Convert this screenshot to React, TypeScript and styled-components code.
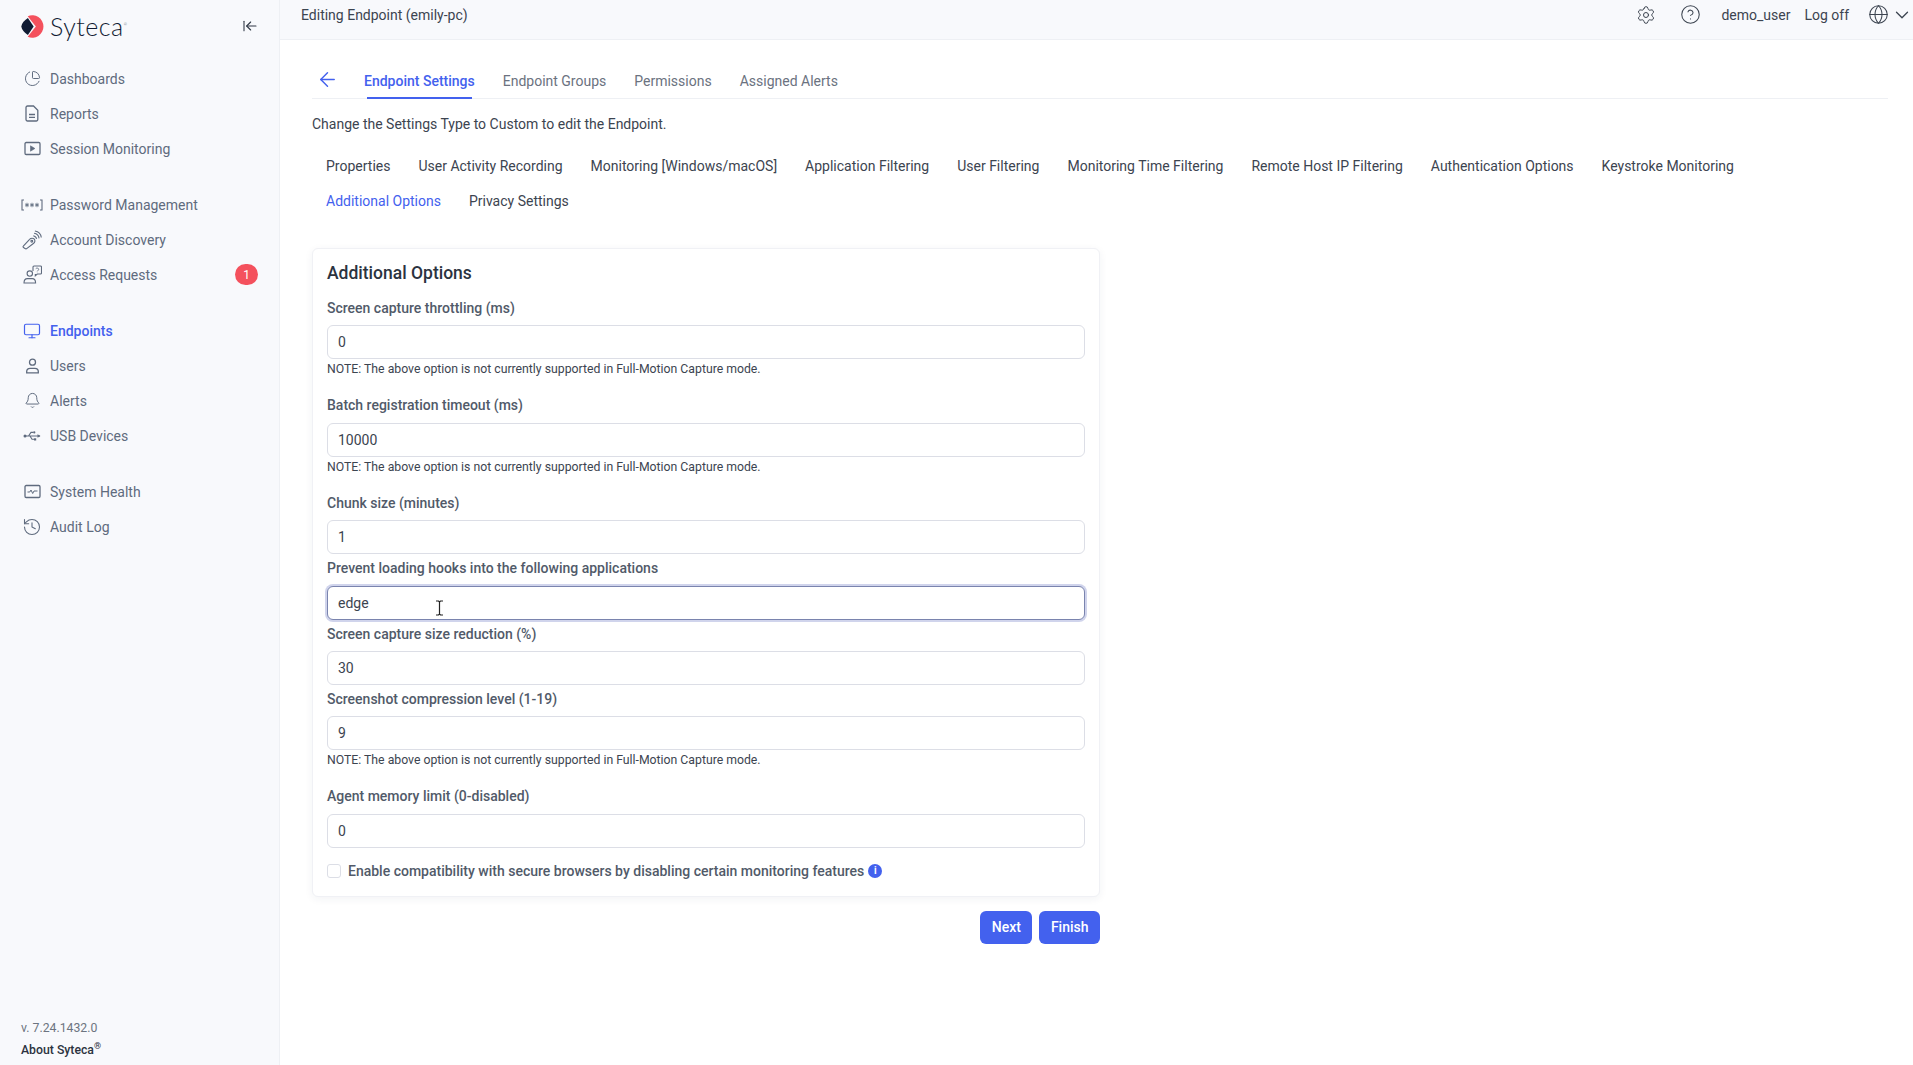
import styled, { createGlobalStyle } from 'styled-components';
import {
  ArrowLeft,
  ArrowLeftToLine,
  Bell,
  ChartPie,
  ChevronDown,
  CircleHelp,
  Globe,
  History,
  Monitor,
  Settings,
} from 'lucide-react';

const GlobalStyle = createGlobalStyle`
  * { box-sizing: border-box; }
  html, body { margin: 0; height: 100%; background: #fff; }
  body {
    font-family: Roboto, "Liberation Sans", sans-serif;
    font-size: 14px;
    color: #3c4450;
  }
`;

const ReportIcon = () => (
  <svg width="14" height="17" viewBox="0 0 14 17" fill="none" stroke="currentColor" strokeWidth="1.3">
    <path d="M2.500 1h6l4.300 4.300v9.200a1.500 1.500 0 0 1-1.500 1.500H2.500A1.500 1.500 0 0 1 1 14.500v-12A1.500 1.500 0 0 1 2.500 1z" />
    <path d="M4 9.500h6M4 12.300h6" />
  </svg>
);

const SessionIcon = () => (
  <svg width="17" height="15" viewBox="0 0 17 15" fill="none" stroke="currentColor" strokeWidth="1.3">
    <rect x="1" y="1.500" width="15" height="12" rx="1.200" />
    <path d="M6.500 4.800v5.400l4.400-2.700z" fill="currentColor" strokeWidth="0.6" />
  </svg>
);

const PasswordIcon = () => (
  <svg width="22" height="12" viewBox="0 0 22 12" fill="none" stroke="currentColor" strokeWidth="1.100">
    <path d="M3 1H1v10h2M19 1h2v10h-2" />
    <path
      d="M6 3.800v4.400M4.100 4.900l3.800 2.200M7.900 4.900 4.100 7.100M11 3.800v4.400M9.100 4.900l3.800 2.200M12.900 4.900 9.100 7.100M16 3.800v4.400M14.100 4.900l3.800 2.200M17.900 4.900l-3.800 2.200"
      strokeWidth="0.900"
    />
  </svg>
);

const DiscoveryIcon = () => (
  <svg width="20" height="20" viewBox="0 0 20 20" fill="none" stroke="currentColor" strokeWidth="1.100">
    <path d="M1.300 16.200 7.600 9.300c1.300-1.500 3.700-1.400 4.700-.1 1 1.300.7 3.100-.6 4L5 18.400c-.6.500-1.400.5-2 .1l-1.500-1c-.5-.3-.6-.9-.2-1.300z" />
    <circle cx="9.800" cy="11.200" r="0.900" />
    <path d="M11.300 5.700c1.600.3 3 1.600 3.300 3.200M12.100 3.300c2.600.4 4.600 2.400 5 5M12.900 1c3.400.5 6 3.100 6.400 6.500" />
  </svg>
);

const RequestIcon = () => (
  <svg width="19" height="19" viewBox="0 0 19 19" fill="none" stroke="currentColor" strokeWidth="1.100">
    <circle cx="6.800" cy="8.600" r="2.700" />
    <path d="M1 18c0-3 1.400-4.400 3.400-4.400h4.800c2 0 3.400 1.400 3.400 4.400z" />
    <path d="M10 6V2a1 1 0 0 1 1-1h6.500a1 1 0 0 1 1 1v6a1 1 0 0 1-1 1h-3.200l-2 1.700V9" />
    <path d="M12.800 3.800c.2-1 2.900-1 2.900.6 0 1-1.300 1-1.400 2M14.300 7.600v.2" strokeWidth="0.900" />
  </svg>
);

const UserIcon = () => (
  <svg width="15" height="16" viewBox="0 0 15 16" fill="none" stroke="currentColor" strokeWidth="1.300">
    <circle cx="7.500" cy="4.200" r="3" />
    <path d="M1.700 14.800v-1.200c0-2 1.500-3.300 3.400-3.300h4.800c1.900 0 3.400 1.300 3.400 3.300v1.200z" />
  </svg>
);

const UsbIcon = () => (
  <svg width="18" height="14" viewBox="0 0 18 14" fill="none" stroke="currentColor" strokeWidth="1.100">
    <circle cx="2" cy="7" r="1.500" fill="currentColor" stroke="none" />
    <path d="M2 7h15M5.500 7l2.500-3.600h2.500M7 7l2 3.300h2" />
    <path d="m14.500 5.300 3 1.700-3 1.700z" fill="currentColor" stroke="none" />
    <circle cx="11.300" cy="3.400" r="1.100" fill="currentColor" stroke="none" />
    <rect x="11" y="9.300" width="2.200" height="2.200" fill="currentColor" stroke="none" />
  </svg>
);

const HealthIcon = () => (
  <svg width="17" height="15" viewBox="0 0 17 15" fill="none" stroke="currentColor" strokeWidth="1.300">
    <rect x="1" y="1.500" width="15" height="12" rx="1.200" />
    <path d="M3.500 8h2.300l1.200-2 1.700 3.500L10 7h3.500" strokeWidth="1" />
  </svg>
);

const LogoIcon = () => (
  <svg width="23" height="23" viewBox="0 0 24 24">
    <path d="M7 1.300A11.700 11.700 0 1 1 7 22.700L15.500 12z" fill="#f4515d" />
    <path d="M7.200 3.200Q1.200 7 .3 12q.9 5 6.900 8.800L13.200 12z" fill="#101b33" />
  </svg>
);

const navGroups = [
  [
    { label: 'Dashboards', icon: <ChartPie size={17} strokeWidth={1.4} /> },
    { label: 'Reports', icon: <ReportIcon /> },
    { label: 'Session Monitoring', icon: <SessionIcon /> },
  ],
  [
    { label: 'Password Management', icon: <PasswordIcon /> },
    { label: 'Account Discovery', icon: <DiscoveryIcon /> },
    { label: 'Access Requests', icon: <RequestIcon />, badge: '1' },
  ],
  [
    { label: 'Endpoints', icon: <Monitor size={18} strokeWidth={1.6} />, active: true },
    { label: 'Users', icon: <UserIcon /> },
    { label: 'Alerts', icon: <Bell size={17} strokeWidth={1.4} /> },
    { label: 'USB Devices', icon: <UsbIcon /> },
  ],
  [
    { label: 'System Health', icon: <HealthIcon /> },
    { label: 'Audit Log', icon: <History size={20} strokeWidth={1.3} /> },
  ],
];

const NOTE = 'NOTE: The above option is not currently supported in Full-Motion Capture mode.';

const fields: { label: string; value: string; note?: boolean; focused?: boolean }[] = [
  { label: 'Screen capture throttling (ms)', value: '0', note: true },
  { label: 'Batch registration timeout (ms)', value: '10000', note: true },
  { label: 'Chunk size (minutes)', value: '1' },
  { label: 'Prevent loading hooks into the following applications', value: 'edge', focused: true },
  { label: 'Screen capture size reduction (%)', value: '30' },
  { label: 'Screenshot compression level (1-19)', value: '9', note: true },
  { label: 'Agent memory limit (0-disabled)', value: '0' },
];

const topTabs = ['Endpoint Settings', 'Endpoint Groups', 'Permissions', 'Assigned Alerts'];
const subTabs = [
  'Properties',
  'User Activity Recording',
  'Monitoring [Windows/macOS]',
  'Application Filtering',
  'User Filtering',
  'Monitoring Time Filtering',
  'Remote Host IP Filtering',
  'Authentication Options',
  'Keystroke Monitoring',
  'Additional Options',
  'Privacy Settings',
];

function Field({ label, value, note, focused }: { label: string; value: string; note?: boolean; focused?: boolean }) {
  return (
    <FieldGroup>
      <FieldLabel>{label}</FieldLabel>
      <InputWrap>
        <TextInput defaultValue={value} $focused={focused} readOnly />
        {focused && (
          <TextCursor width="9" height="16" viewBox="0 0 9 16" fill="none">
            <path d="M1 1h2.500l1 1 1-1H8M4.500 2v12M1 15h2.500l1-1 1 1H8" stroke="#222" strokeWidth="1.200" />
          </TextCursor>
        )}
      </InputWrap>
      {note && <Note>{NOTE}</Note>}
    </FieldGroup>
  );
}

export default function App() {
  return (
    <Page>
      <GlobalStyle />
      <Sidebar>
        <Brand>
          <LogoIcon />
          <BrandName>
            Syteca<BrandMark>®</BrandMark>
          </BrandName>
          <CollapseButton>
            <ArrowLeftToLine size={16} strokeWidth={1.6} />
          </CollapseButton>
        </Brand>
        {navGroups.map((group, i) => (
          <NavGroup key={i}>
            {group.map((item) => (
              <NavItem key={item.label} $active={item.active}>
                <NavIcon>{item.icon}</NavIcon>
                {item.label}
                {item.badge && <Badge>{item.badge}</Badge>}
              </NavItem>
            ))}
          </NavGroup>
        ))}
        <SideFooter>
          <Version>v. 7.24.1432.0</Version>
          <About>
            About Syteca<sup>®</sup>
          </About>
        </SideFooter>
      </Sidebar>
      <Main>
        <TopBar>
          <PageTitle>Editing Endpoint (emily-pc)</PageTitle>
          <TopActions>
            <TopIcon>
              <Settings size={20} strokeWidth={1.2} />
            </TopIcon>
            <TopIcon>
              <CircleHelp size={21} strokeWidth={1.2} />
            </TopIcon>
            <TopLink $left={8}>demo_user</TopLink>
            <TopLink $left={14}>Log off</TopLink>
            <LangPicker>
              <Globe size={21} strokeWidth={1.2} />
              <ChevronDown size={22} strokeWidth={1.4} />
            </LangPicker>
          </TopActions>
        </TopBar>
        <Content>
          <TopTabs>
            <BackLink>
              <ArrowLeft size={23} strokeWidth={1.5} />
            </BackLink>
            {topTabs.map((tab, i) => (
              <TopTab key={tab} $active={i === 0}>
                {tab}
              </TopTab>
            ))}
          </TopTabs>
          <Hint>Change the Settings Type to Custom to edit the Endpoint.</Hint>
          <SubTabs>
            {subTabs.map((tab) => (
              <SubTab key={tab} $active={tab === 'Additional Options'}>
                {tab}
              </SubTab>
            ))}
          </SubTabs>
          <FormColumn>
            <Card>
              <CardTitle>Additional Options</CardTitle>
              {fields.map((f) => (
                <Field key={f.label} {...f} />
              ))}
              <CheckRow>
                <CheckBox type="checkbox" readOnly />
                Enable compatibility with secure browsers by disabling certain monitoring features
                <InfoDot>i</InfoDot>
              </CheckRow>
            </Card>
            <Actions>
              <PrimaryButton>Next</PrimaryButton>
              <PrimaryButton>Finish</PrimaryButton>
            </Actions>
          </FormColumn>
        </Content>
      </Main>
    </Page>
  );
}

const Page = styled.div`
  display: flex;
  height: 100vh;
  overflow: hidden;
`;

const Sidebar = styled.aside`
  width: 280px;
  flex: none;
  display: flex;
  flex-direction: column;
  background: #f8f9fc;
  border-right: 1px solid #eef0f4;
`;

const Brand = styled.div`
  height: 61px;
  padding: 15px 21px 0;
  display: flex;
  align-items: flex-start;
  gap: 6px;
`;

const BrandName = styled.span`
  margin-top: -4px;
  font-family: Lato, Roboto, sans-serif;
  font-size: 25px;
  font-weight: 300;
  line-height: 28px;
  color: #101b33;
  letter-spacing: 0.5px;
`;

const BrandMark = styled.span`
  font-size: 4px;
  vertical-align: 10px;
`;

const CollapseButton = styled.span`
  margin-left: auto;
  margin-top: 3px;
  color: #2e3744;
  display: flex;
`;

const NavGroup = styled.nav`
  margin-bottom: 21px;
`;

const NavItem = styled.a<{ $active?: boolean }>`
  height: 35px;
  padding: 0 21px;
  display: flex;
  align-items: center;
  gap: 7px;
  color: ${(p) => (p.$active ? '#4361ee' : '#5f6b7e')};
  font-weight: ${(p) => (p.$active ? 500 : 400)};
`;

const NavIcon = styled.span`
  width: 22px;
  height: 22px;
  display: flex;
  align-items: center;
  justify-content: center;
  flex: none;
`;

const Badge = styled.span`
  margin-left: auto;
  width: 23px;
  height: 21px;
  border-radius: 11px;
  background: #f4515d;
  color: #fff;
  font-size: 12px;
  display: flex;
  align-items: center;
  justify-content: center;
`;

const SideFooter = styled.div`
  margin-top: auto;
  padding: 0 21px 5px;
`;

const Version = styled.div`
  margin-bottom: 1px;
  font-size: 12.25px;
  line-height: 22px;
  color: #6c7480;
`;

const About = styled.div`
  font-size: 12.25px;
  font-weight: 500;
  line-height: 20px;
  color: #2b3340;

  sup {
    font-size: 9px;
    line-height: 0;
  }
`;

const Main = styled.main`
  flex: 1;
  min-width: 0;
  display: flex;
  flex-direction: column;
`;

const TopBar = styled.header`
  height: 40px;
  flex: none;
  padding: 0 0 10px 21px;
  display: flex;
  align-items: center;
  justify-content: space-between;
  background: #f8f9fc;
  border-bottom: 1px solid #eef0f4;
`;

const PageTitle = styled.div`
  color: #3c4450;
`;

const TopActions = styled.div`
  display: flex;
  align-items: center;
  color: #3c4450;
`;

const TopIcon = styled.span`
  width: 45px;
  display: flex;
  justify-content: center;
`;

const TopLink = styled.span<{ $left: number }>`
  margin-left: ${(p) => p.$left}px;
`;

const LangPicker = styled.span`
  margin-left: 19px;
  display: flex;
  align-items: center;
  gap: 2px;
`;

const Content = styled.div`
  flex: 1;
  padding: 20px 25px 0 32px;
`;

const TopTabs = styled.div`
  display: flex;
  height: 39px;
  border-bottom: 1px solid #eef0f4;
`;

const BackLink = styled.span`
  width: 52px;
  padding-left: 4px;
  padding-top: 8px;
  color: #4361ee;
`;

const TopTab = styled.span<{ $active?: boolean }>`
  position: relative;
  margin-right: 28px;
  padding-top: 13px;
  color: ${(p) => (p.$active ? '#4361ee' : '#6b7280')};
  font-weight: ${(p) => (p.$active ? 500 : 400)};

  ${(p) =>
    p.$active &&
    `&::after {
      content: '';
      position: absolute;
      left: 3px;
      right: 3px;
      bottom: -1px;
      height: 2px;
      background: #4361ee;
    }`}
`;

const Hint = styled.p`
  margin: 15px 0 0;
  line-height: 20px;
  color: #3c4450;
`;

const SubTabs = styled.div`
  display: flex;
  flex-wrap: wrap;
  max-width: 1480px;
  margin-top: 15px;
`;

const SubTab = styled.span<{ $active?: boolean }>`
  padding: 0 14px;
  line-height: 35px;
  color: ${(p) => (p.$active ? '#4361ee' : '#3c4450')};
`;

const FormColumn = styled.div`
  width: 788px;
  margin-top: 29px;
`;

const Card = styled.section`
  padding: 12px 14px 15px;
  background: #fff;
  border: 1px solid #f0f1f5;
  border-radius: 6px;
  box-shadow: 0 2px 8px rgba(40, 50, 80, 0.06);
`;

const CardTitle = styled.h2`
  margin: 0 0 9px;
  font-size: 17.5px;
  font-weight: 500;
  line-height: 24px;
  color: #2b3340;
`;

const FieldGroup = styled.div`
  display: flex;
  flex-direction: column;
`;

const FieldLabel = styled.label`
  height: 31.4px;
  padding-top: 4px;
  line-height: 20px;
  font-weight: 500;
  color: #515a69;
`;

const InputWrap = styled.div`
  position: relative;
`;

const TextInput = styled.input<{ $focused?: boolean }>`
  display: block;
  width: 100%;
  height: 34px;
  padding: 0 10px;
  font: inherit;
  color: #3c4450;
  background: #fff;
  border: 1px solid ${(p) => (p.$focused ? '#7a84ae' : '#dcdee6')};
  border-radius: 6px;
  outline: none;
  box-shadow: ${(p) => (p.$focused ? '0 0 0 2px #d0d4ec' : 'none')};
`;

const TextCursor = styled.svg`
  position: absolute;
  left: 108px;
  top: 14px;
`;

const Note = styled.div`
  margin: 2px 0 13px;
  font-size: 12.25px;
  line-height: 17px;
  color: #3c4450;
`;

const CheckRow = styled.label`
  display: flex;
  align-items: center;
  gap: 7px;
  margin-top: 13px;
  line-height: 20px;
  font-weight: 500;
  color: #515a69;
`;

const CheckBox = styled.input`
  appearance: none;
  width: 14px;
  height: 14px;
  margin: 0;
  background: #fff;
  border: 1px solid #dcdee6;
  border-radius: 3px;
`;

const InfoDot = styled.span`
  width: 14px;
  height: 14px;
  margin-left: -3px;
  border-radius: 50%;
  background: #4361ee;
  color: #fff;
  font-size: 10px;
  font-weight: 700;
  line-height: 14px;
  text-align: center;
`;

const Actions = styled.div`
  display: flex;
  justify-content: flex-end;
  gap: 7px;
  margin-top: 14px;
`;

const PrimaryButton = styled.button`
  height: 33px;
  padding: 0 11.5px 1px;
  font: inherit;
  font-weight: 500;
  color: #fff;
  background: #4361ee;
  border: 0;
  border-radius: 6px;
`;
